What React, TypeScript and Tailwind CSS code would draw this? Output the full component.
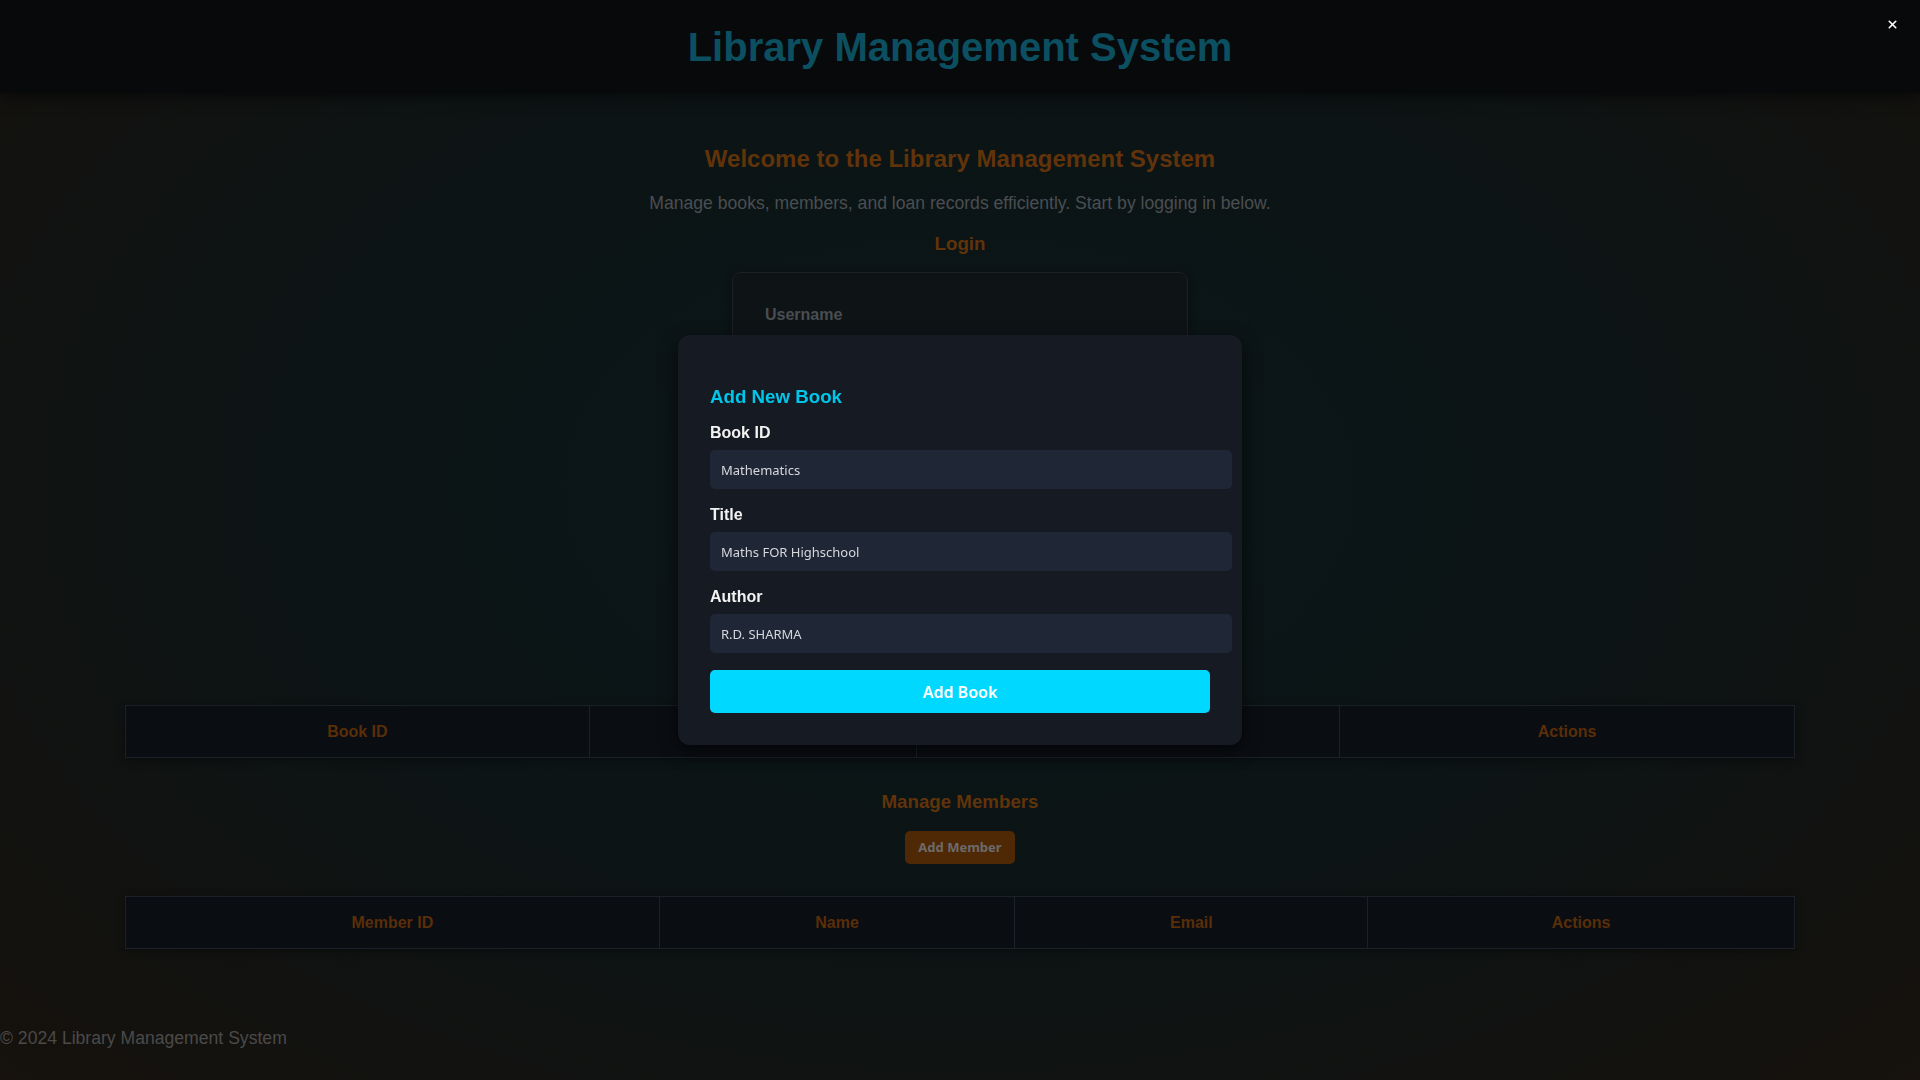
import { X } from "lucide-react";

const bookCols = [
  { label: "Book ID", w: "w-[464px]" },
  { label: "Title", w: "w-[327px]" },
  { label: "Author", w: "w-[424px]" },
  { label: "Actions", w: "w-[455px]" },
];

const memberCols = [
  { label: "Member ID", w: "w-[534px]" },
  { label: "Name", w: "w-[356px]" },
  { label: "Email", w: "w-[353px]" },
  { label: "Actions", w: "w-[427px]" },
];

function HeaderTable({ cols }: { cols: { label: string; w: string }[] }) {
  return (
    <table className="w-[1670px] mx-auto border-collapse border border-[#1c2027] bg-[#0a0d12] shadow-[0_2px_8px_rgba(0,0,0,0.4)]">
      <thead>
        <tr>
          {cols.map((c) => (
            <th
              key={c.label}
              className={`${c.w} h-[52px] border border-[#1c2027] text-center text-base font-bold text-[#5a2e08]`}
            >
              {c.label}
            </th>
          ))}
        </tr>
      </thead>
    </table>
  );
}

function Field({ label, value }: { label: string; value: string }) {
  return (
    <div className="flex flex-col">
      <label className="pt-px text-base font-bold leading-[18px] text-[#f2f2f2]">{label}</label>
      <input
        readOnly
        value={value}
        className="mt-[8px] h-[39px] w-[522px] rounded-[5px] bg-[#1f2736] px-[11px] text-[13px] text-[#d6d8dc] outline-none font-['Noto_Sans',sans-serif]"
      />
    </div>
  );
}

export default function App() {
  return (
    <div className="relative min-h-screen w-full overflow-hidden font-['Liberation_Sans',Arial,sans-serif] bg-[radial-gradient(ellipse_75%_85%_at_50%_45%,#0b1618_0%,#0c1415_45%,#121210_75%,#17110b_100%)]">
      <header className="relative z-10 flex h-[93px] items-center justify-center bg-[#07090b] shadow-[0_4px_14px_rgba(0,0,0,0.55)]">
        <h1 className="text-[40px] font-bold text-[#0b4f60]">Library Management System</h1>
      </header>

      <main className="flex flex-col items-center pt-[52px]">
        <h2 className="text-2xl font-bold leading-[28px] text-[#61330a]">
          Welcome to the Library Management System
        </h2>
        <p className="mt-[20px] text-[17.6px] leading-[21px] text-[#4a4e51]">
          Manage books, members, and loan records efficiently. Start by logging in below.
        </p>
        <h3 className="mt-[19px] text-[18.72px] font-bold leading-[22px] text-[#61330a]">Login</h3>

        <div className="mt-[17px] flex h-[295px] w-[456px] flex-col rounded-lg border border-[#1a2023] bg-[#0e1416] px-[32px] pt-[30px] shadow-[0_2px_10px_rgba(0,0,0,0.35)]">
          <label className="text-base font-bold text-[#4a4d50]">Username</label>
          <div className="mt-[10px] h-[38px] rounded-md bg-[#07090a]" />
          <label className="mt-4 text-base font-bold text-[#4a4d50]">Password</label>
          <div className="mt-[10px] h-[38px] rounded-md bg-[#07090a]" />
          <div className="mt-6 h-[40px] rounded-md bg-[#4f2806]" />
        </div>

        <h3 className="mt-[33px] text-[18.72px] font-bold leading-[22px] text-[#61330a]">Manage Books</h3>
        <button className="mt-[18px] h-[33px] rounded bg-[#4f2806] px-3 text-[13px] font-bold text-[#6a6a6a]">
          Add Book
        </button>
        <div className="mt-[32px] w-full">
          <HeaderTable cols={bookCols} />
        </div>

        <h3 className="mt-[33px] text-[18.72px] font-bold leading-[22px] text-[#61330a]">Manage Members</h3>
        <button className="mt-[18px] h-[33px] w-[110px] rounded-[5px] bg-[#4f2806] text-[13px] font-bold text-[#6b6b6b] font-['Noto_Sans',sans-serif]">
          Add Member
        </button>
        <div className="mt-[32px] w-full">
          <HeaderTable cols={memberCols} />
        </div>
      </main>

      <footer className="mt-[79px] pb-[32px]">
        <p className="text-[17.6px] leading-[21px] text-[#4a4a4a]">© 2024 Library Management System</p>
      </footer>

      {/* modal layer */}
      <div className="fixed inset-0 z-20 flex items-center justify-center">
        <button className="absolute right-[21px] top-[18px] text-white">
          <X size={13} strokeWidth={3} />
        </button>
        <div className="flex w-[564px] flex-col rounded-xl bg-[#161a22] px-8 pb-8 pt-[51px] shadow-[0_6px_18px_rgba(0,0,0,0.6)]">
          <h3 className="text-[18.72px] font-bold leading-[22px] text-[#00c6ea]">Add New Book</h3>
          <div className="mt-[15px] flex flex-col gap-4">
            <Field label="Book ID" value="Mathematics" />
            <Field label="Title" value="Maths FOR Highschool" />
            <Field label="Author" value="R.D. SHARMA" />
          </div>
          <button className="mt-[17px] h-[43px] w-[500px] rounded-[5px] bg-[#00d8ff] text-base font-semibold text-white font-['Noto_Sans',sans-serif]">
            Add Book
          </button>
        </div>
      </div>
    </div>
  );
}
